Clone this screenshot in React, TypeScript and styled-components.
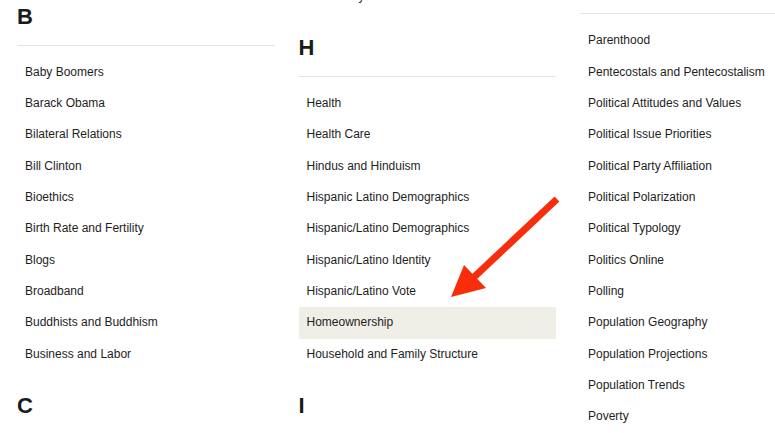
import React from 'react'
import styled, { createGlobalStyle } from 'styled-components'

interface IGroup {
  letter?: string,
  topics: string[],
}

interface IColumn {
  offset: number,
  groups: IGroup[],
}

const columns: IColumn[] = [
  {
    offset: 4.8,
    groups: [
      {
        letter: 'B',
        topics: [
          'Baby Boomers',
          'Barack Obama',
          'Bilateral Relations',
          'Bill Clinton',
          'Bioethics',
          'Birth Rate and Fertility',
          'Blogs',
          'Broadband',
          'Buddhists and Buddhism',
          'Business and Labor',
        ],
      },
      { letter: 'C', topics: ['Catholics and Catholicism'] },
    ],
  },
  {
    offset: -19.2,
    groups: [
      { topics: ['Gun Policy'] },
      {
        letter: 'H',
        topics: [
          'Health',
          'Health Care',
          'Hindus and Hinduism',
          'Hispanic Latino Demographics',
          'Hispanic/Latino Demographics',
          'Hispanic/Latino Identity',
          'Hispanic/Latino Vote',
          'Homeownership',
          'Household and Family Structure',
        ],
      },
      { letter: 'I', topics: ['Immigration'] },
    ],
  },
  {
    offset: -26.7,
    groups: [
      {
        letter: 'P',
        topics: [
          'Parenthood',
          'Pentecostals and Pentecostalism',
          'Political Attitudes and Values',
          'Political Issue Priorities',
          'Political Party Affiliation',
          'Political Polarization',
          'Political Typology',
          'Politics Online',
          'Polling',
          'Population Geography',
          'Population Projections',
          'Population Trends',
          'Poverty',
        ],
      },
    ],
  },
]

const highlighted = 'Homeownership'

const App: React.FC = () => {
  return (
    <Page>
      <GlobalStyle />
      <Columns>
        {columns.map(({ offset, groups }, i) => (
          <Column key={i} $offset={offset}>
            {groups.map(({ letter, topics }, j) => (
              <Group key={j}>
                {letter && <Letter>{letter}</Letter>}
                <TopicList $first={!letter}>
                  {topics.map(topic => (
                    <Topic key={topic} $active={topic === highlighted}>
                      {topic}
                    </Topic>
                  ))}
                </TopicList>
              </Group>
            ))}
          </Column>
        ))}
      </Columns>
      <Arrow width="775" height="433" viewBox="0 0 775 433">
        <line x1="557" y1="199" x2="472" y2="279" stroke="#f72d0b" strokeWidth="7" />
        <polygon points="451,297 464,265 486,288" fill="#f72d0b" />
      </Arrow>
    </Page>
  )
}

const GlobalStyle = createGlobalStyle`
  html, body {
    margin: 0;
    padding: 0;
    background: #fff;
  }
  body {
    font-family: "Liberation Sans", Arial, sans-serif;
    color: #1e1e1e;
  }
`

const Page = styled.div`
  position: relative;
  width: 775px;
  height: 433px;
  overflow: hidden;
  background: #fff;
`

const Columns = styled.div`
  display: flex;
  align-items: flex-start;
  gap: 24px;
  padding-left: 17px;
`

const Column = styled.div<{ $offset: number }>`
  flex: 0 0 257.5px;
  width: 257.5px;
  margin-top: ${p => p.$offset}px;
`

const Group = styled.section`
  display: block;
`

const Letter = styled.h2`
  margin: 0;
  padding-bottom: 16px;
  border-bottom: 1px solid #e4e4e4;
  font-size: 22px;
  line-height: 24px;
  font-weight: 700;
  color: #1b1b1b;
`

const TopicList = styled.ul<{ $first: boolean }>`
  list-style: none;
  margin: ${p => (p.$first ? 0 : 11)}px 0 24px;
  padding: 0;
`

const Topic = styled.li<{ $active: boolean }>`
  display: block;
  padding: 5px 8px;
  font-size: 12px;
  line-height: 21.33px;
  white-space: nowrap;
  color: #1e1e1e;
  background: ${p => (p.$active ? '#f0efe7' : 'transparent')};
`

const Arrow = styled.svg`
  position: absolute;
  left: 0;
  top: 0;
  pointer-events: none;
`

export default App
